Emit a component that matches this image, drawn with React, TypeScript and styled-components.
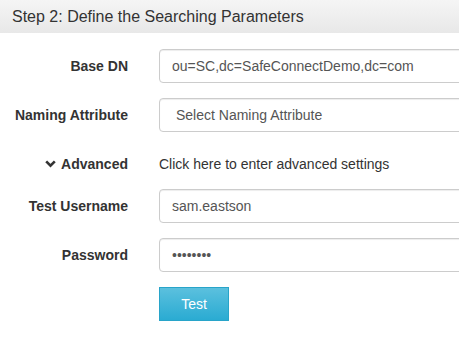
import React from 'react';
import styled, { createGlobalStyle } from 'styled-components';

const GlobalStyle = createGlobalStyle`
  html, body {
    margin: 0;
    padding: 0;
    background: #fff;
    overflow: hidden;
  }
  body {
    font-family: "Liberation Sans", Arial, sans-serif;
    font-size: 14px;
    color: #333;
  }
`;

const Panel = styled.div`
  width: 459px;
  overflow: hidden;
`;

const PanelHeading = styled.div`
  height: 33px;
  box-sizing: border-box;
  padding: 0 12px;
  display: flex;
  align-items: center;
  font-size: 16px;
  color: #333;
  background: linear-gradient(to bottom, #f5f5f5 0%, #e8e8e8 100%);
`;

const Form = styled.form`
  width: 700px;
  padding-top: 16px;
  display: flex;
  flex-direction: column;
  gap: 15px;
`;

const Row = styled.div<{ $compact?: boolean }>`
  display: grid;
  grid-template-columns: 128px 1fr;
  column-gap: 31px;
  align-items: ${p => (p.$compact ? 'start' : 'center')};
  height: ${p => (p.$compact ? '27px' : '34px')};
  padding-top: ${p => (p.$compact ? '7px' : '0')};
  box-sizing: border-box;
  line-height: 20px;
`;

const Label = styled.label`
  font-weight: bold;
  text-align: right;
  color: #333;
  display: flex;
  justify-content: flex-end;
  align-items: center;
  gap: 5px;
`;

const TextInput = styled.input`
  height: 34px;
  box-sizing: border-box;
  padding: 6px 12px;
  font-family: inherit;
  font-size: 14px;
  color: #555;
  border: 1px solid #ccc;
  border-radius: 4px;
  box-shadow: inset 0 1px 1px rgba(0, 0, 0, 0.075);
  outline: none;
  width: 100%;
`;

const Select = styled.select`
  height: 34px;
  box-sizing: border-box;
  padding: 6px 12px 6px 16px;
  font-family: inherit;
  font-size: 14px;
  color: #555;
  background: #fff;
  border: 1px solid #ccc;
  border-radius: 4px;
  box-shadow: inset 0 1px 1px rgba(0, 0, 0, 0.075);
  appearance: none;
  outline: none;
  width: 100%;
`;

const Hint = styled.span`
  color: #333;
`;

const InfoButton = styled.button`
  width: 70px;
  height: 34px;
  font-family: inherit;
  font-size: 14px;
  color: #fff;
  border: 1px solid #28a4c9;
  border-radius: 0;
  background: linear-gradient(to bottom, #5bc0de 0%, #2aabd2 100%);
  cursor: pointer;
`;

const Chevron = () => (
  <svg width="11" height="8" viewBox="0 0 11 8">
    <path d="M1.2 1.3 L5.5 5.6 L9.8 1.3" fill="none" stroke="#333" strokeWidth="2.6" />
  </svg>
);

const App = () => (
  <Panel>
    <GlobalStyle />
    <PanelHeading>Step 2: Define the Searching Parameters</PanelHeading>
    <Form onSubmit={e => e.preventDefault()}>
      <Row>
        <Label>Base DN</Label>
        <TextInput defaultValue="ou=SC,dc=SafeConnectDemo,dc=com" />
      </Row>
      <Row>
        <Label>Naming Attribute</Label>
        <Select defaultValue="">
          <option value="">Select Naming Attribute</option>
        </Select>
      </Row>
      <Row $compact>
        <Label>
          <Chevron />
          Advanced
        </Label>
        <Hint>Click here to enter advanced settings</Hint>
      </Row>
      <Row>
        <Label>Test Username</Label>
        <TextInput defaultValue="sam.eastson" />
      </Row>
      <Row>
        <Label>Password</Label>
        <TextInput type="password" defaultValue="password" />
      </Row>
      <Row>
        <span />
        <div>
          <InfoButton type="button">Test</InfoButton>
        </div>
      </Row>
    </Form>
  </Panel>
);

export default App;
